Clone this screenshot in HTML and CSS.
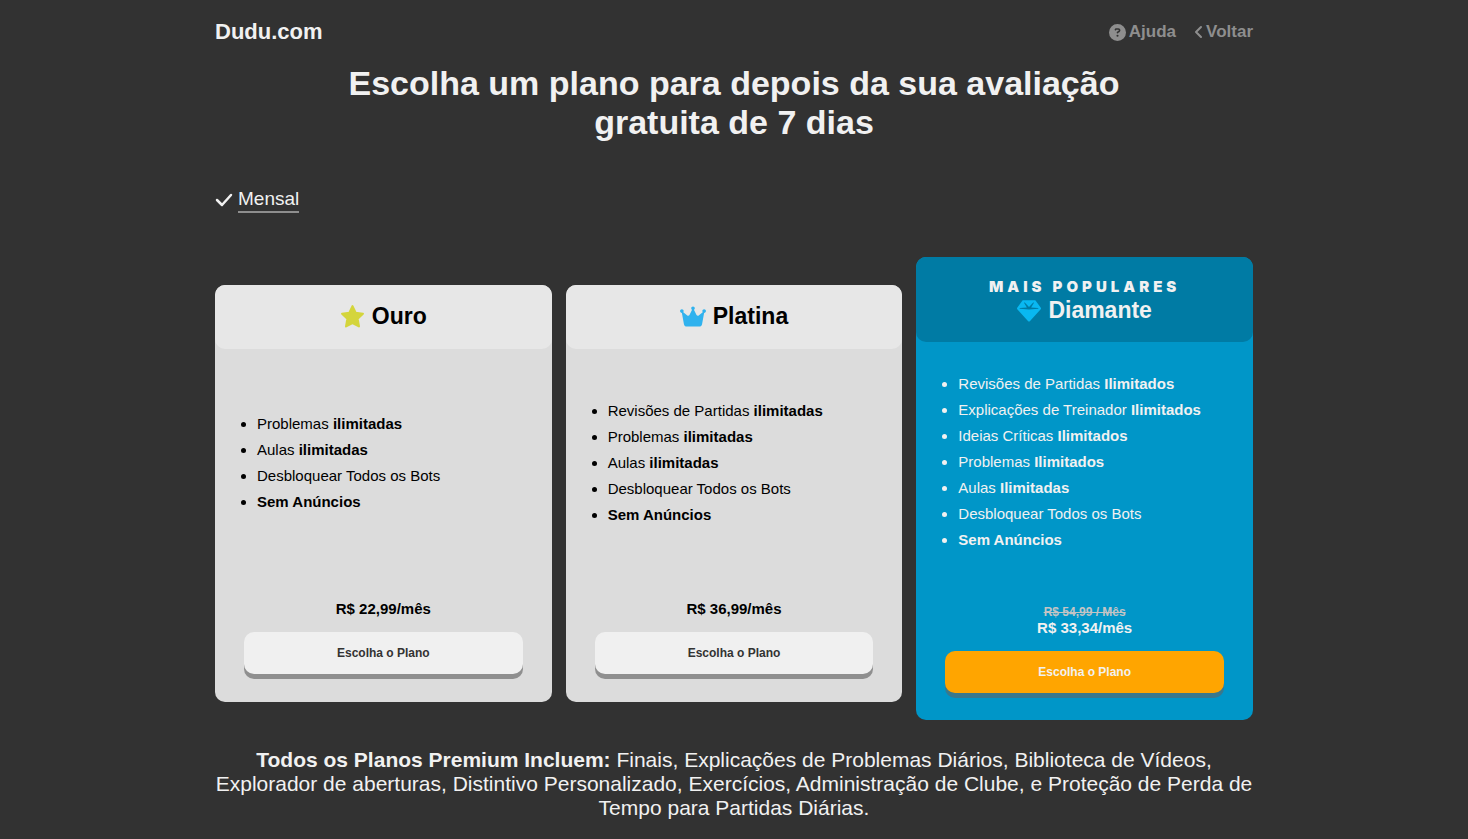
FILE: index.html
```html
<!DOCTYPE html>
<html lang="pt-BR">
<head>
<meta charset="utf-8">
<meta name="viewport" content="width=device-width, initial-scale=1">
<title>Dudu.com</title>
<link rel="stylesheet" href="styles.css">
</head>
<body>
<div class="page">
  <header class="topbar">
    <a class="brand" href="#">Dudu.com</a>
    <nav class="topnav">
      <a href="#"><svg class="icon-help" viewBox="0 0 512 512" aria-hidden="true"><path fill="currentColor" d="M256 0a256 256 0 1 0 0 512A256 256 0 1 0 256 0zM169.800 165.300c7.900-22.300 29.100-37.300 52.800-37.300h58.300c34.900 0 63.100 28.300 63.100 63.100c0 22.600-12.100 43.500-31.700 54.800L280 264.400c-.2 13-10.900 23.600-24 23.600c-13.300 0-24-10.700-24-24v-13.500c0-8.600 4.600-16.500 12.100-20.800l44.300-25.400c4.700-2.700 7.600-7.700 7.600-13.100c0-8.400-6.800-15.100-15.100-15.100h-58.300c-3.400 0-6.400 2.100-7.500 5.300l-.4 1.200c-4.400 12.500-18.200 19-30.600 14.600s-19-18.200-14.600-30.600zM224 352a32 32 0 1 1 64 0a32 32 0 1 1-64 0z"/></svg>Ajuda</a>
      <a href="#"><svg class="icon-back" viewBox="0 0 10 16" aria-hidden="true"><path d="M8 3 3 8l5 5" fill="none" stroke="currentColor" stroke-width="2" stroke-linecap="round" stroke-linejoin="round"/></svg>Voltar</a>
    </nav>
  </header>

  <main>
    <h1 class="title">Escolha um plano para depois da sua avaliação gratuita de 7 dias</h1>

    <div class="period">
      <svg class="icon-check" viewBox="0 0 18 14" aria-hidden="true"><path d="m2 7 5 5L16 2" fill="none" stroke="currentColor" stroke-width="2.500" stroke-linecap="round" stroke-linejoin="round"/></svg>
      <a href="#">Mensal</a>
    </div>

    <div class="plans">
      <section class="plan">
        <div class="plan-head">
          <h2><svg class="icon-star" viewBox="0 0 24 24" aria-hidden="true"><path d="m12 2 3 6.400 7 .9-5.100 4.900 1.300 7.300L12 18.200l-6.200 3.300 1.300-7.300L2 9.300l7-.9z" fill="currentColor" stroke="currentColor" stroke-width="2" stroke-linejoin="round"/></svg>Ouro</h2>
        </div>
        <ul class="features">
          <li>Problemas <b>ilimitadas</b></li>
          <li>Aulas <b>ilimitadas</b></li>
          <li>Desbloquear Todos os Bots</li>
          <li><b>Sem Anúncios</b></li>
        </ul>
        <div class="plan-foot">
          <p class="price">R$ 22,99/mês</p>
          <button class="choose" type="button">Escolha o Plano</button>
        </div>
      </section>

      <section class="plan">
        <div class="plan-head">
          <h2><svg class="icon-crown" viewBox="0 0 576 512" aria-hidden="true"><path fill="currentColor" d="M309 106c11.400-7 19-19.700 19-34c0-22.100-17.900-40-40-40s-40 17.900-40 40c0 14.400 7.600 27 19 34L209.700 220.600c-9.100 18.200-32.700 23.400-48.600 10.700L72 160c5-6.700 8-15 8-24c0-22.100-17.900-40-40-40S0 113.900 0 136s17.900 40 40 40c.2 0 .5 0 .7 0L86.400 427.400c5.500 30.400 32 52.600 63 52.600h277.200c30.900 0 57.400-22.100 63-52.600L535.300 176c.2 0 .5 0 .7 0c22.100 0 40-17.900 40-40s-17.900-40-40-40s-40 17.900-40 40c0 9 3 17.300 8 24l-89.100 71.300c-15.900 12.700-39.500 7.500-48.600-10.700L309 106z"/></svg>Platina</h2>
        </div>
        <ul class="features">
          <li>Revisões de Partidas <b>ilimitadas</b></li>
          <li>Problemas <b>ilimitadas</b></li>
          <li>Aulas <b>ilimitadas</b></li>
          <li>Desbloquear Todos os Bots</li>
          <li><b>Sem Anúncios</b></li>
        </ul>
        <div class="plan-foot">
          <p class="price">R$ 36,99/mês</p>
          <button class="choose" type="button">Escolha o Plano</button>
        </div>
      </section>

      <section class="plan plan-featured">
        <div class="plan-head">
          <p class="ribbon">MAIS POPULARES</p>
          <h2><svg class="icon-gem" viewBox="0 0 512 512" aria-hidden="true"><path fill="currentColor" d="M116.700 33.800c4.500-6.100 11.700-9.800 19.300-9.800h240c7.600 0 14.800 3.600 19.300 9.800l112 152c6.800 9.200 6.100 21.900-1.500 30.300l-232 256c-4.500 5-11 7.900-17.800 7.900s-13.200-2.900-17.800-7.900l-232-256c-7.700-8.500-8.300-21.200-1.500-30.300l112-152zm38.500 39.800c-3.300 2.500-4.200 7-2.100 10.500l57.400 95.600L63.300 192c-4.100 .3-7.300 3.800-7.300 8s3.200 7.600 7.300 8l192 16c.4 0 .9 0 1.300 0l192-16c4.100-.3 7.300-3.800 7.300-8s-3.200-7.600-7.300-8l-147.200-12.300l57.400-95.600c2.100-3.500 1.200-8.100-2.100-10.500s-7.900-2-10.700 1L256 172.200L165.900 74.600c-2.800-3-7.400-3.400-10.700-1z"/></svg>Diamante</h2>
        </div>
        <ul class="features">
          <li>Revisões de Partidas <b>Ilimitados</b></li>
          <li>Explicações de Treinador <b>Ilimitados</b></li>
          <li>Ideias Críticas <b>Ilimitados</b></li>
          <li>Problemas <b>Ilimitados</b></li>
          <li>Aulas <b>Ilimitadas</b></li>
          <li>Desbloquear Todos os Bots</li>
          <li><b>Sem Anúncios</b></li>
        </ul>
        <div class="plan-foot">
          <p class="old-price"><s>R$ 54,99 / Mês</s></p>
          <p class="price">R$ 33,34/mês</p>
          <button class="choose" type="button">Escolha o Plano</button>
        </div>
      </section>
    </div>

    <p class="included"><b>Todos os Planos Premium Incluem:</b> Finais, Explicações de Problemas Diários, Biblioteca de Vídeos, Explorador de aberturas, Distintivo Personalizado, Exercícios, Administração de Clube, e Proteção de Perda de Tempo para Partidas Diárias.</p>
  </main>
</div>
</body>
</html>
```
FILE: styles.css
```css
* {
  box-sizing: border-box;
  margin: 0;
  padding: 0;
}

body {
  background: #323232;
  color: #f1f1f1;
  font-family: "Liberation Sans", Arial, sans-serif;
}

a {
  color: inherit;
  text-decoration: none;
}

.page {
  max-width: 1070px;
  margin: 0 auto;
  padding: 0 16px 18px;
}

.topbar {
  display: flex;
  align-items: center;
  justify-content: space-between;
  height: 64px;
}

.brand {
  font-size: 22px;
  font-weight: bold;
}

.topnav {
  display: flex;
  gap: 17px;
  color: #8e8e8e;
  font-size: 17px;
  font-weight: bold;
}

.topnav a {
  display: flex;
  align-items: center;
  gap: 3px;
}

.icon-help {
  width: 17px;
  height: 17px;
}

.icon-back {
  width: 10px;
  height: 16px;
}

.title {
  max-width: 830px;
  margin: 0 auto;
  font-size: 34px;
  line-height: 39px;
  text-align: center;
}

.period {
  display: flex;
  align-items: center;
  gap: 5px;
  margin-top: 45px;
  font-size: 19px;
  line-height: 24px;
}

.period a {
  border-bottom: 2px solid #8e8e8e;
}

.icon-check {
  width: 18px;
  height: 14px;
}

.plans {
  display: grid;
  grid-template-columns: repeat(3, minmax(0, 1fr));
  gap: 14px;
  margin-top: 44px;
}

.plan {
  display: flex;
  flex-direction: column;
  margin: 28px 0 18px;
  border-radius: 10px;
  background: #dcdcdc;
  color: #000;
}

.plan-featured {
  margin: 0;
  background: #0096c8;
  color: #f1f1f1;
}

.plan-head {
  padding: 18px 16px 19px;
  border-radius: 10px;
  background: #e7e7e7;
  text-align: center;
}

.plan-featured .plan-head {
  padding: 20px 16px 18px;
  background: #007ba4;
}

.plan-head h2 {
  display: flex;
  align-items: center;
  justify-content: center;
  gap: 7px;
  font-size: 23px;
  line-height: 27px;
}

.ribbon {
  font-family: Inter, "Liberation Sans", sans-serif;
  font-size: 15px;
  font-weight: 900;
  letter-spacing: 4px;
  line-height: 20px;
}

.icon-star {
  width: 25px;
  height: 25px;
  color: #d4d53c;
}

.icon-crown {
  width: 26px;
  height: 23px;
  color: #30b2ee;
}

.icon-gem {
  width: 24px;
  height: 24px;
  color: #09b8f1;
}

.features {
  display: flex;
  flex: 1;
  flex-direction: column;
  justify-content: center;
  padding: 29px 16px 29px 42px;
  font-size: 15px;
  line-height: 26px;
}

.plan-foot {
  padding: 23px 29px 28px;
  text-align: center;
}

.plan-featured .plan-foot {
  padding-bottom: 27px;
}

.price {
  font-size: 15px;
  font-weight: bold;
  line-height: 18px;
}

.old-price {
  color: #c4c4c4;
  font-size: 12px;
  font-weight: bold;
  line-height: 14px;
}

.choose {
  display: block;
  width: 100%;
  height: 42px;
  margin-top: 14px;
  border: 0;
  border-radius: 10px;
  background: #f0f0f0;
  box-shadow: 0 5px 0 #8f8f8f;
  color: #333;
  font-family: inherit;
  font-size: 12px;
  font-weight: bold;
  cursor: pointer;
}

.plan-featured .choose {
  background: #ffa500;
  box-shadow: 0 5px 0 #39788d;
  color: #f1f1f1;
}

.included {
  margin-top: 28px;
  font-size: 21px;
  line-height: 24px;
  text-align: center;
}

@media (max-width: 800px) {
  .plans {
    grid-template-columns: 1fr;
  }

  .plan {
    margin: 0;
  }
}
```
